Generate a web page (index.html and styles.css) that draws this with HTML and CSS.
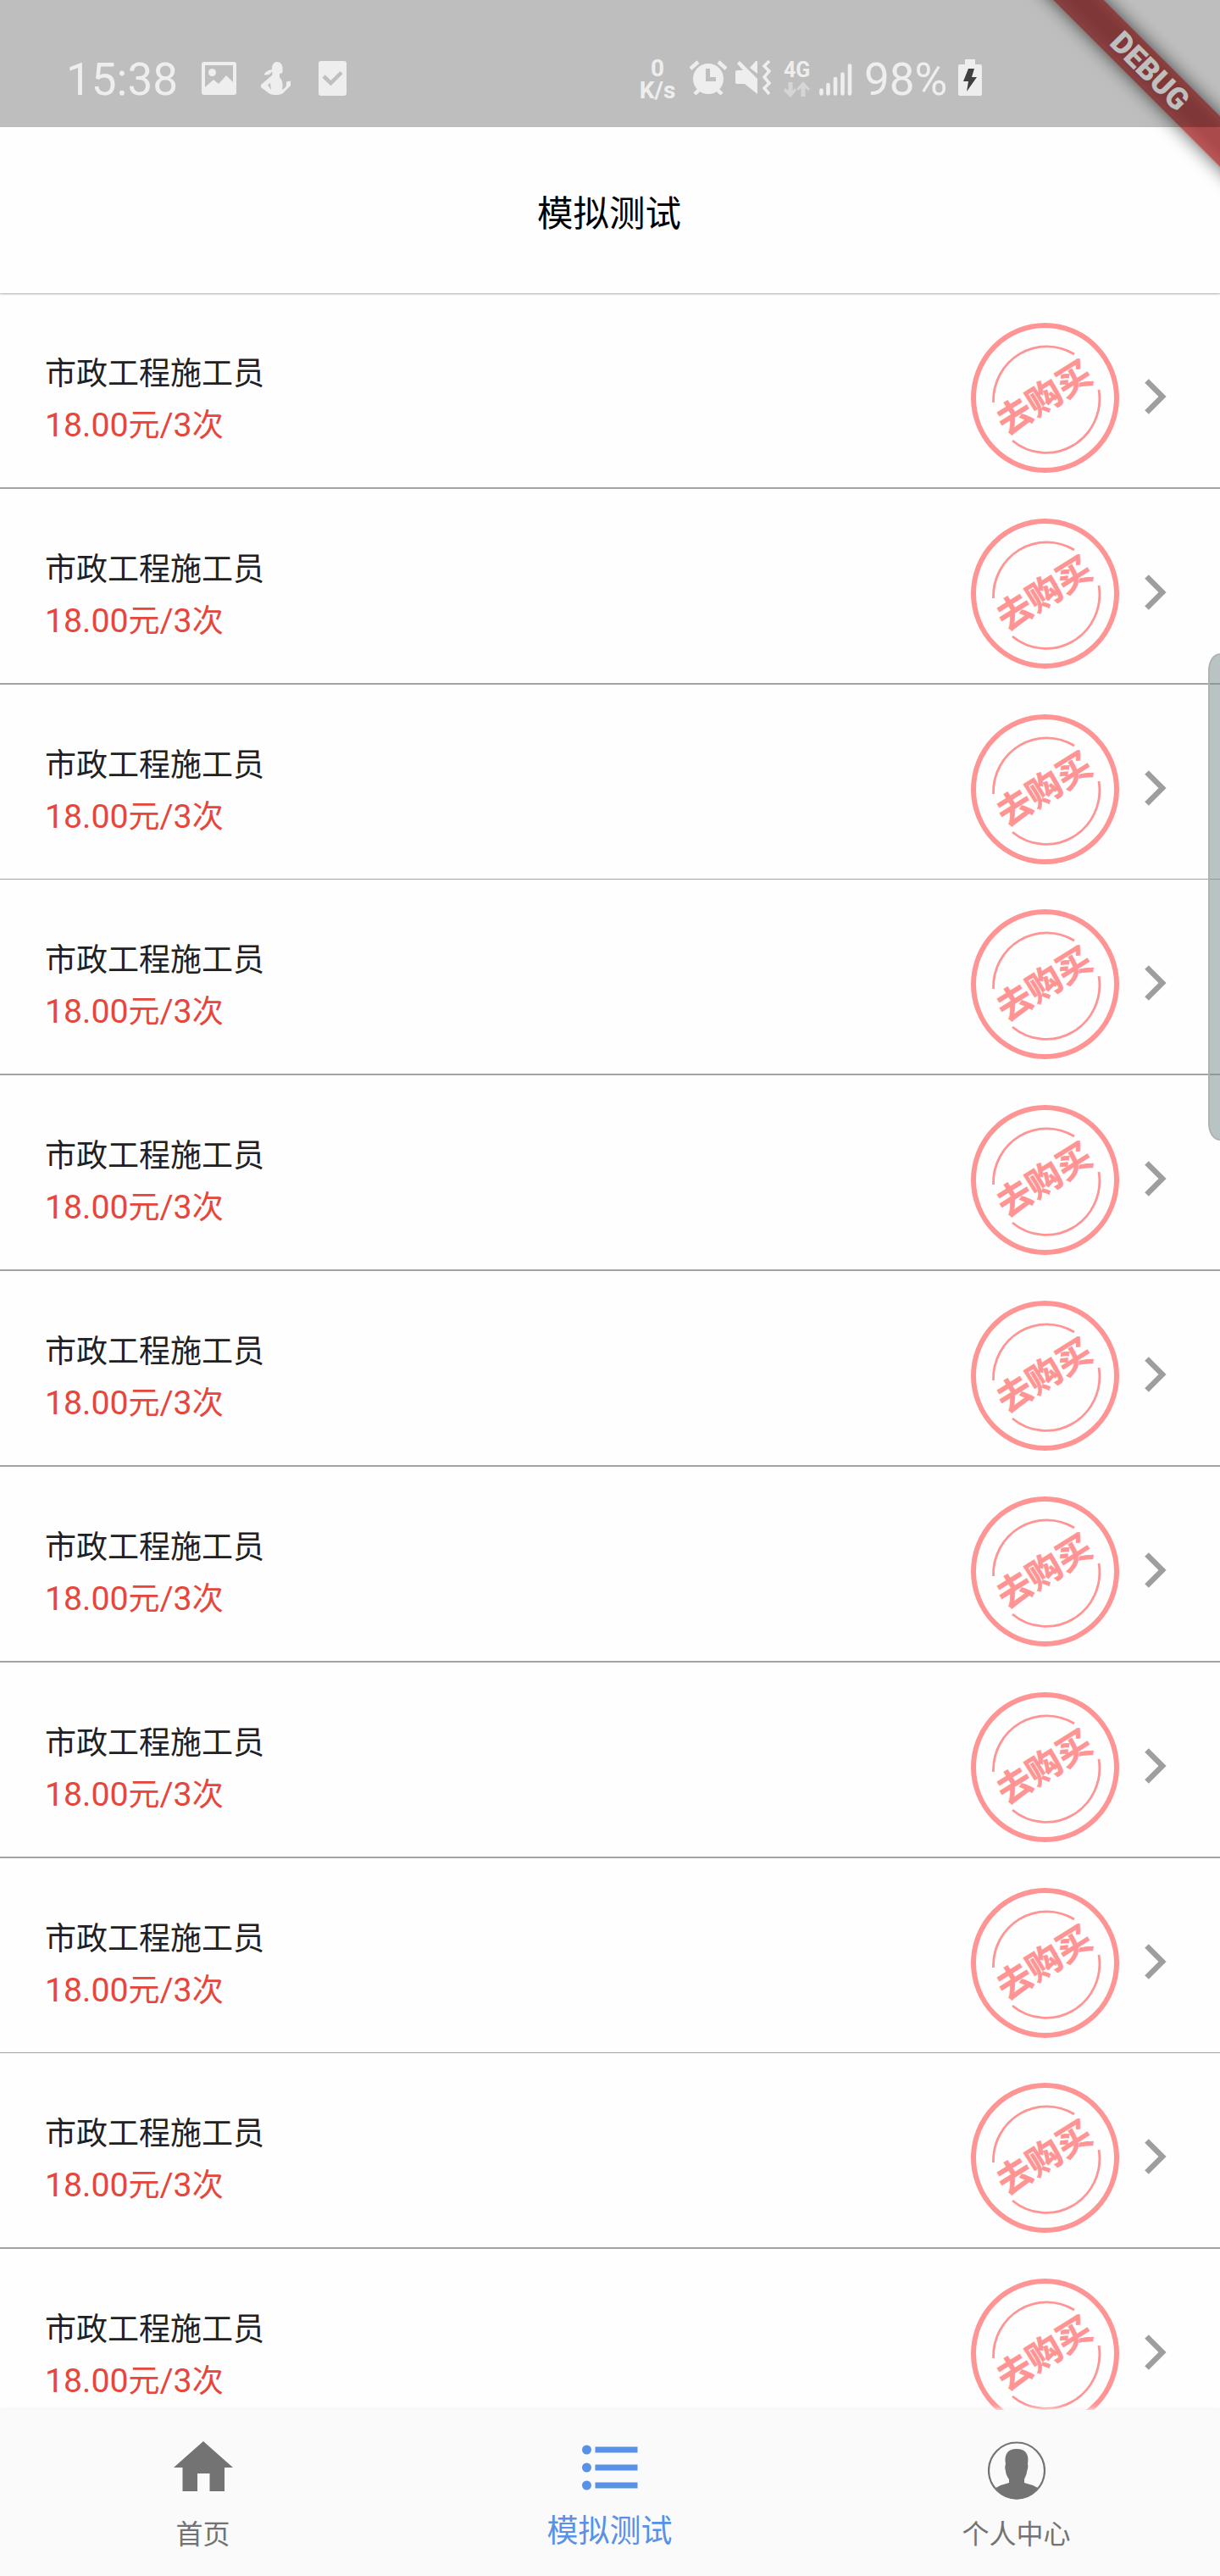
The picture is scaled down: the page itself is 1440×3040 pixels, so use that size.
FILE: index.html
```
<!DOCTYPE html>
<html lang="zh-CN">
<head>
<meta charset="utf-8">
<title>模拟测试</title>
<link rel="stylesheet" href="styles.css">
</head>
<body>
<svg class="defs" width="0" height="0" aria-hidden="true">
  <symbol id="stamp" viewBox="0 0 176 178">
    <ellipse cx="87.500" cy="88.500" rx="84.500" ry="85.500" fill="none" stroke="#ff9494" stroke-width="6"/>
    <path d="M26.500 94A63 64 0 0 1 122 37" fill="none" stroke="#ff9494" stroke-width="2.800"/>
    <path d="M151 79A63 64 0 0 1 49 139" fill="none" stroke="#ff9494" stroke-width="2.800"/>
    <text class="stamp-text" x="86.500" y="103" text-anchor="middle" transform="rotate(-32 86.500 88)">去购买</text>
  </symbol>
  <symbol id="chevron" viewBox="0 0 26 42"><path d="M2.500 2.500L21 21L2.500 39.500" fill="none" stroke="#9e9e9e" stroke-width="6.500"/></symbol>
</svg>
<div class="screen">
  <header class="status">
    <div class="status-left">
      <span class="clock">15:38</span>
      <svg class="ico-pic" viewBox="0 0 41 39"><path fill-rule="evenodd" d="M3 0H38Q41 0 41 3V36Q41 39 38 39H3Q0 39 0 36V3Q0 0 3 0ZM4 4V30L14 21L20 26L29 16L37 24V4ZM12.500 8A4.500 4.500 0 1 1 12.400 8Z"/></svg>
      <svg class="ico-yoga" viewBox="0 0 35 39"><path fill-rule="evenodd" d="M13 6C14 1 17 0 19 0C23 0 26 4 25.500 8V12Q25 14 22 14V18C26 22 26 28 25 33Q30 30 30 27V23.500L35 22.500V28L26 37C21 40 12 40 8 36L0 30V27L13 16Q14 15 13 11ZM8 27L12 33L11 25Z"/><path d="M13 9Q6 10 3.500 15Q9 17 13.500 11Z"/></svg>
      <svg class="ico-check" viewBox="0 0 33 41"><rect width="33" height="41" rx="3"/><path d="M6 18L14.500 26L27 13.500" fill="none" stroke="#bfbfbf" stroke-width="4.500"/></svg>
    </div>
    <div class="status-right">
      <div class="speed"><span>0</span><span>K/s</span></div>
      <svg class="ico-alarm" viewBox="0 0 44 41"><circle cx="22" cy="22" r="18"/><path d="M1 10L10 2M43 10L34 2M6 40L12 34M38 40L32 34" fill="none" stroke="#eee" stroke-width="4.500"/><path d="M21.500 10V22.500H31" fill="none" stroke="#bfbfbf" stroke-width="5"/></svg>
      <svg class="ico-mute" viewBox="0 0 42 41"><path d="M0 14Q0 12 2 12H9L2 4L5 1L26 22V40L11 28H2Q0 28 0 26ZM17 9L24 1Q26 0 26 2V16Z"/><path d="M40 1L34 7L40 13L34 20L40 27L34 33L40 40" fill="none" stroke="#eee" stroke-width="3.500"/></svg>
      <div class="net"><span>4G</span><svg viewBox="0 0 31 19"><path d="M5.500 1H10.500V11L13 8L15 11L8 19L0 11L2 8L5.500 11ZM20.500 18H25.500V8L29 11L31 9L23 0L15 9L17 11L20.500 8Z"/></svg></div>
      <svg class="ico-signal" viewBox="0 0 39 38"><path d="M2.500 31.500V35.500M10.500 25V35.500M19 18V35.500M27.500 12.500V35.500M36 2.500V35.500" stroke="#eee" stroke-width="4.600" stroke-linecap="round"/></svg>
      <span class="percent">98%</span>
      <svg class="ico-battery" viewBox="0 0 28 43"><path d="M8 0H20V6H26Q28 6 28 8V41Q28 43 26 43H2Q0 43 0 41V8Q0 6 2 6H8Z"/><path d="M12 11H19L16 21H22L10 38L12 26H6Z" fill="#404040"/></svg>
    </div>
  </header>
  <div class="title">模拟测试</div>
  <main class="list">
    <div class="row"><div class="info"><div class="name">市政工程施工员</div><div class="price">18.00<span>元</span>/3<span>次</span></div></div><svg class="stamp"><use href="#stamp"/></svg><svg class="chevron"><use href="#chevron"/></svg></div>
    <div class="row"><div class="info"><div class="name">市政工程施工员</div><div class="price">18.00<span>元</span>/3<span>次</span></div></div><svg class="stamp"><use href="#stamp"/></svg><svg class="chevron"><use href="#chevron"/></svg></div>
    <div class="row thin"><div class="info"><div class="name">市政工程施工员</div><div class="price">18.00<span>元</span>/3<span>次</span></div></div><svg class="stamp"><use href="#stamp"/></svg><svg class="chevron"><use href="#chevron"/></svg></div>
    <div class="row"><div class="info"><div class="name">市政工程施工员</div><div class="price">18.00<span>元</span>/3<span>次</span></div></div><svg class="stamp"><use href="#stamp"/></svg><svg class="chevron"><use href="#chevron"/></svg></div>
    <div class="row"><div class="info"><div class="name">市政工程施工员</div><div class="price">18.00<span>元</span>/3<span>次</span></div></div><svg class="stamp"><use href="#stamp"/></svg><svg class="chevron"><use href="#chevron"/></svg></div>
    <div class="row"><div class="info"><div class="name">市政工程施工员</div><div class="price">18.00<span>元</span>/3<span>次</span></div></div><svg class="stamp"><use href="#stamp"/></svg><svg class="chevron"><use href="#chevron"/></svg></div>
    <div class="row"><div class="info"><div class="name">市政工程施工员</div><div class="price">18.00<span>元</span>/3<span>次</span></div></div><svg class="stamp"><use href="#stamp"/></svg><svg class="chevron"><use href="#chevron"/></svg></div>
    <div class="row"><div class="info"><div class="name">市政工程施工员</div><div class="price">18.00<span>元</span>/3<span>次</span></div></div><svg class="stamp"><use href="#stamp"/></svg><svg class="chevron"><use href="#chevron"/></svg></div>
    <div class="row thin"><div class="info"><div class="name">市政工程施工员</div><div class="price">18.00<span>元</span>/3<span>次</span></div></div><svg class="stamp"><use href="#stamp"/></svg><svg class="chevron"><use href="#chevron"/></svg></div>
    <div class="row"><div class="info"><div class="name">市政工程施工员</div><div class="price">18.00<span>元</span>/3<span>次</span></div></div><svg class="stamp"><use href="#stamp"/></svg><svg class="chevron"><use href="#chevron"/></svg></div>
    <div class="row"><div class="info"><div class="name">市政工程施工员</div><div class="price">18.00<span>元</span>/3<span>次</span></div></div><svg class="stamp"><use href="#stamp"/></svg><svg class="chevron"><use href="#chevron"/></svg></div>
  </main>
  <nav class="tabs">
    <div class="tab"><svg class="ico-home" viewBox="0 0 70 60"><path d="M35 0L70 31H60V59H42.500V38H28V59H10.500V31H0Z"/></svg><span>首页</span></div>
    <div class="tab active"><svg class="ico-list" viewBox="0 0 66 54"><circle cx="5.500" cy="6" r="5.500"/><circle cx="5.500" cy="27" r="5.500"/><circle cx="5.500" cy="48" r="5.500"/><path d="M15.500 2.500H65.500V9.500H15.500ZM15.500 23.500H65.500V30.500H15.500ZM15.500 44.500H65.500V51.500H15.500Z"/></svg><span>模拟测试</span></div>
    <div class="tab"><svg class="ico-user" viewBox="0 0 68 69"><circle cx="34" cy="34.500" r="33" fill="none" stroke="#737373" stroke-width="2.200"/><path d="M9.500 55Q16 51 25 49V45C22 41 21 37 21 35C20 32 20 29 21 27C19 16 23 9 34 9C45 9 49 16 47 27C48 29 47 33 46 36C46 39 44 42 43 45V49Q52 51 59 55Q49 68.500 34 68.500Q19 68.500 9.500 55Z"/></svg><span>个人中心</span></div>
  </nav>
  <div class="edge-handle"></div>
  <div class="debug-clip"><div class="debug">DEBUG</div></div>
</div>
</body>
</html>
```
FILE: styles.css
```
* { box-sizing: border-box; }
body { margin: 0; background: #fff; font-family: Roboto, "Noto Sans CJK SC", sans-serif; }
svg { display: block; flex: none; }
.defs { position: absolute; }
.screen { position: relative; width: 1440px; height: 3040px; display: flex; flex-direction: column; overflow: hidden; background: #fefefe; }

/* The translucent status bar also dims the debug ribbon beneath it. */
.status { position: relative; z-index: 3; height: 150px; flex: none; background: rgba(0, 0, 0, .25); color: #eee; fill: #eee; display: flex; justify-content: space-between; padding: 62px 281px 0 78px; }
.status-left, .status-right { display: flex; align-items: flex-start; }
.clock { width: 160px; font-size: 53px; line-height: 64px; white-space: nowrap; }
.ico-pic { width: 41px; height: 39px; margin-top: 11px; }
.ico-yoga { width: 35px; height: 39px; margin: 11px 0 0 29px; }
.ico-check { width: 33px; height: 41px; margin: 10px 0 0 33px; }
.speed { width: 46px; display: flex; flex-direction: column; align-items: center; font-size: 28px; font-weight: 700; line-height: 26px; margin: 6px 1px 0 -1px; }
.ico-alarm { width: 44px; height: 41px; margin: 9px 0 0 14px; }
.ico-mute { width: 42px; height: 41px; margin: 9px 0 0 10px; }
.net { width: 33px; margin: 9px 0 0 15px; font-size: 25px; font-weight: 700; line-height: 24px; display: flex; flex-direction: column; }
.net svg { width: 31px; height: 19px; fill: #d5d5d5; margin-top: 1px; }
.ico-signal { width: 39px; height: 38px; margin: 13px 0 0 9px; }
.percent { width: 101px; margin-left: 14px; font-size: 53px; line-height: 64px; white-space: nowrap; }
.ico-battery { width: 28px; height: 43px; margin: 8px 0 0 10px; }

.title { height: 196px; flex: none; display: flex; align-items: center; justify-content: center; font-size: 42.500px; color: #000; padding: 0 2px 0 0; position: relative; z-index: 1; background: #fefefe; box-shadow: 0 1px 2px #aaa; }

.list { flex: 1; min-height: 0; overflow: hidden; }
.row { height: 231px; display: flex; align-items: flex-start; padding: 0 63px 0 53px; border-bottom: 2px solid #a2a2a2; }
.row.thin { height: 230px; border-bottom-width: 1px; }
.info { flex: 1; padding-top: 69px; }
.name { font-size: 37px; line-height: 54px; color: #212121; }
.price { font-size: 39.2px; line-height: 60px; color: #e6463b; margin-top: 3px; white-space: nowrap; }
.price span { font-size: 37px; }
.stamp { width: 176px; height: 178px; margin-top: 35px; }
.stamp-text { font: 700 41px "Noto Sans CJK SC", sans-serif; fill: #ff9494; stroke: #ff9494; stroke-width: .7px; }
.chevron { width: 26px; height: 42px; margin: 101px 0 0 29px; }

.tabs { height: 196px; flex: none; background: #fafafa; box-shadow: 0 -1px 6px #f3f3f3; position: relative; display: flex; color: #737373; fill: #737373; }
.tab { flex: 1; display: flex; flex-direction: column; align-items: center; font-size: 32px; line-height: 48px; padding-right: 1px; }
.tab span { margin-top: auto; margin-bottom: 25px; }
.tab.active { color: #5891e5; fill: #5891e5; font-size: 37px; line-height: 54px; }
.ico-home { width: 70px; height: 60px; margin-top: 37px; }
.ico-list { width: 66px; height: 54px; margin-top: 41px; }
.ico-user { width: 68px; height: 69px; margin-top: 37px; }

.edge-handle { position: absolute; right: 0; top: 771px; width: 14px; height: 575px; border-radius: 14px 0 0 14px / 20px 0 0 20px; background: rgba(130, 146, 148, .55); border: 2px solid #afb3b2; border-right: 0; }
.debug-clip { position: absolute; z-index: 2; top: 0; right: 0; width: 300px; height: 300px; overflow: hidden; }
.debug { position: absolute; left: 27px; top: 63px; width: 380px; height: 42px; line-height: 42px; text-align: center; font-size: 35.7px; font-weight: 900; color: #fff; background: linear-gradient(#b85757, #aa4a4a 30%, #aa4a4a 65%, #b85757); transform: rotate(45deg); box-shadow: 0 0 21px 0 rgba(0, 0, 0, .65); }
```
